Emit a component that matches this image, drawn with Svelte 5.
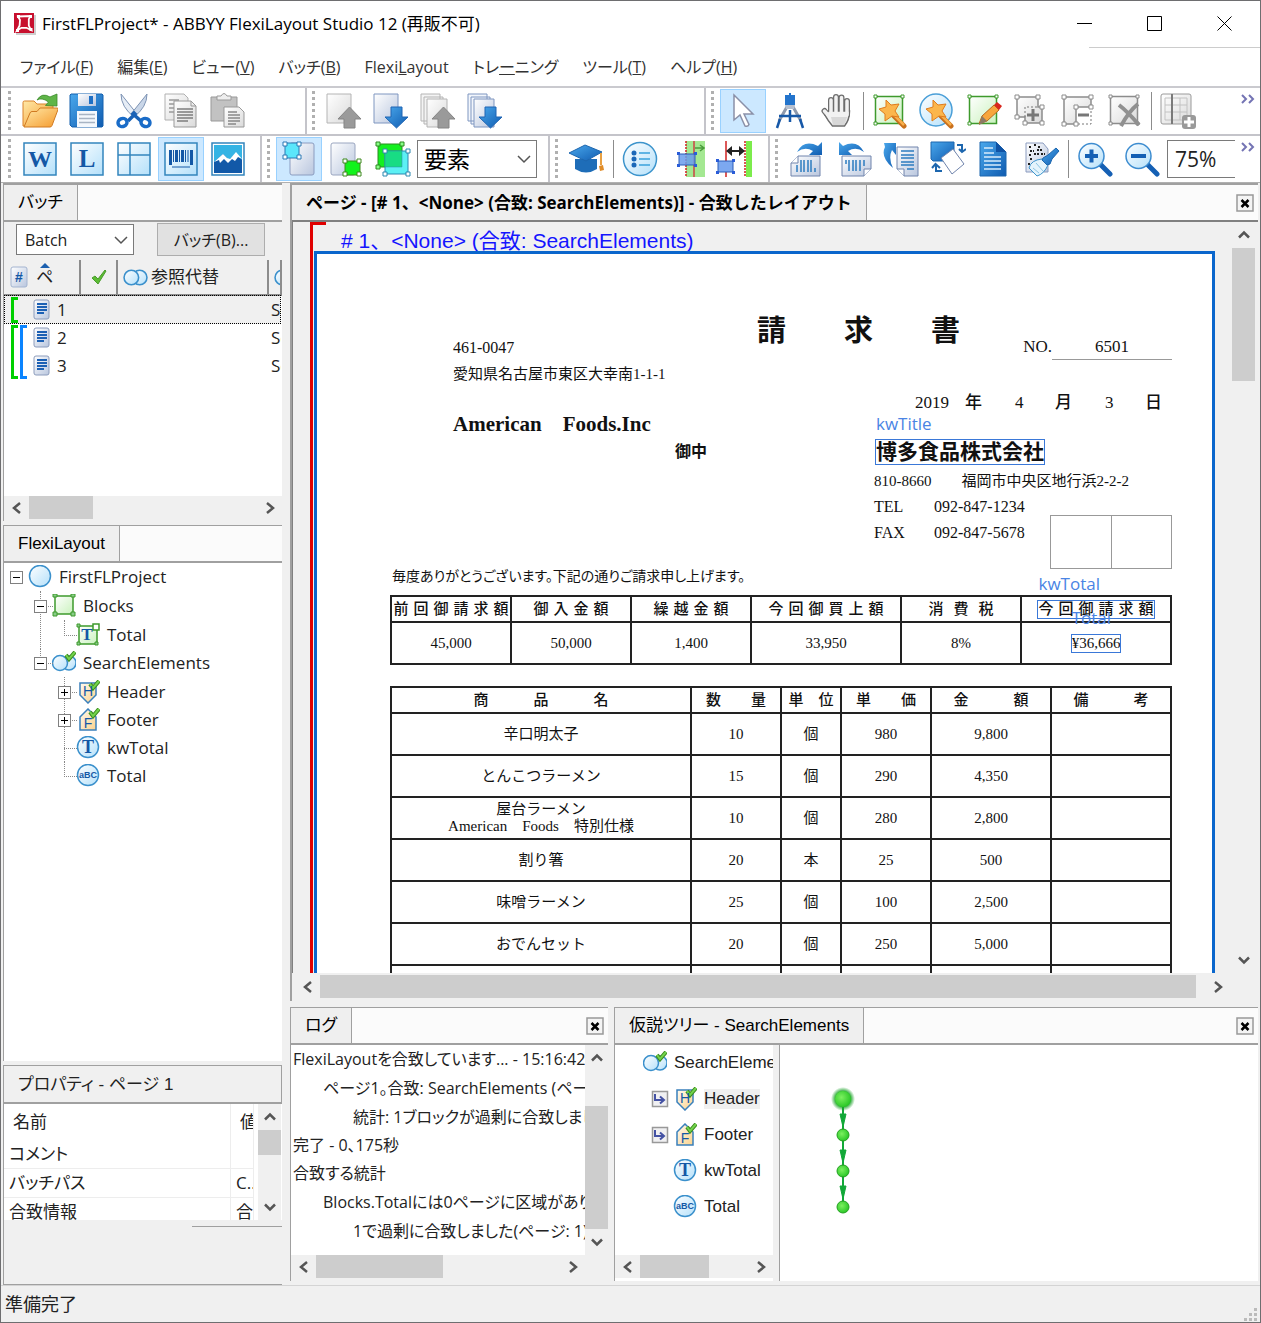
<script lang="ts">
    type Tool = { icon: string; label: string; active?: boolean; disabled?: boolean };

    const menus = [
        { text: 'ファイル', key: 'F' },
        { text: '編集', key: 'E' },
        { text: 'ビュー', key: 'V' },
        { text: 'バッチ', key: 'B' },
        { before: 'Flexi', under: 'L', after: 'ayout' },
        { before: 'トレ', under: 'ー', after: 'ニング' },
        { text: 'ツール', key: 'T' },
        { text: 'ヘルプ', key: 'H' }
    ];

    const fileTools: Tool[] = [
        { icon: 'open', label: '開く' },
        { icon: 'save', label: '保存' },
        { icon: 'cut', label: '切り取り' },
        { icon: 'copy', label: 'コピー', disabled: true },
        { icon: 'paste', label: '貼り付け', disabled: true }
    ];
    const pageTools: Tool[] = [
        { icon: 'page-up', label: '前のページ', disabled: true },
        { icon: 'page-down', label: '次のページ' },
        { icon: 'pages-up', label: '前のバッチ', disabled: true },
        { icon: 'pages-down', label: '次のバッチ' }
    ];
    const pointerTools: Tool[] = [
        { icon: 'arrow', label: '選択', active: true },
        { icon: 'compass', label: '測定' },
        { icon: 'hand', label: 'スクロール' }
    ];
    const blockTools: Tool[] = [
        { icon: 'wand-block', label: 'ブロックの作成' },
        { icon: 'wand-element', label: '要素の作成' },
        { icon: 'draw-block', label: 'ブロックの描画' },
        { icon: 'area-add', label: '領域の追加', disabled: true },
        { icon: 'area-cut', label: '領域の削減', disabled: true },
        { icon: 'area-delete', label: '領域の削除', disabled: true }
    ];
    const objectTools: Tool[] = [
        { icon: 'word', label: '単語' },
        { icon: 'line', label: '行' },
        { icon: 'table', label: '表' },
        { icon: 'barcode', label: 'バーコード', active: true },
        { icon: 'picture', label: '画像' }
    ];
    const showTools: Tool[] = [
        { icon: 'show-element', label: '要素の表示', active: true },
        { icon: 'show-block', label: 'ブロックの表示' },
        { icon: 'show-both', label: 'すべて表示' }
    ];
    const matchTools: Tool[] = [
        { icon: 'list', label: 'リスト' },
        { icon: 'relation', label: '関係' },
        { icon: 'distance', label: '距離' }
    ];
    const imageTools: Tool[] = [
        { icon: 'rotate-right', label: '右に回転' },
        { icon: 'rotate-left', label: '左に回転' },
        { icon: 'rotate-page', label: 'ページの回転' },
        { icon: 'flip', label: '反転' },
        { icon: 'document', label: '文書' },
        { icon: 'clean', label: 'ノイズ除去' }
    ];
    const zoomTools: Tool[] = [
        { icon: 'zoom-in', label: '拡大' },
        { icon: 'zoom-out', label: '縮小' }
    ];

    // letters drawn over the icon shapes
    const letters: Record<string, { text: string; x: number; y: number; size: number; kind: string }> = {
        word: { text: 'W', x: 18, y: 26, size: 24, kind: 'serif' },
        line: { text: 'L', x: 18, y: 26, size: 25, kind: 'serif' },
        'text-block': { text: 'T', x: 11, y: 17, size: 17, kind: 'serif' },
        'static-text': { text: 'T', x: 12, y: 17, size: 18, kind: 'serif' },
        header: { text: 'H', x: 12, y: 16, size: 14, kind: 'sans' },
        footer: { text: 'F', x: 12, y: 20, size: 14, kind: 'sans' },
        string: { text: 'aBC', x: 12, y: 14, size: 9, kind: 'bold' },
        number: { text: '#', x: 10, y: 17, size: 14, kind: 'bold' }
    };

    const properties = [
        { name: 'コメント', value: '' },
        { name: 'バッチパス', value: 'C...' },
        { name: '合致情報', value: '合致' }
    ];

    const log = [
        {
            text: 'FlexiLayoutを合致しています... - 15:16:42',
            children: [
                {
                    text: 'ページ1。合致: SearchElements (ページ',
                    children: [{ text: '統計: 1ブロックが過剰に合致しました', children: [] }]
                }
            ]
        },
        { text: '完了 - 0、175秒', children: [] },
        {
            text: '合致する統計',
            children: [
                {
                    text: 'Blocks.Totalには0ページに区域があります',
                    children: [{ text: '1で過剰に合致しました(ページ: 1)', children: [] }]
                }
            ]
        }
    ];

    const tree = {
        name: 'FirstFLProject',
        icon: 'circle',
        open: true,
        children: [
            {
                name: 'Blocks',
                icon: 'blocks',
                open: true,
                children: [{ name: 'Total', icon: 'text-block' }]
            },
            {
                name: 'SearchElements',
                icon: 'elements',
                open: true,
                children: [
                    { name: 'Header', icon: 'header', open: false },
                    { name: 'Footer', icon: 'footer', open: false },
                    { name: 'kwTotal', icon: 'static-text' },
                    { name: 'Total', icon: 'string' }
                ]
            }
        ]
    };

    const hypotheses = [
        { name: 'Header', icon: 'header', jump: true, selected: true },
        { name: 'Footer', icon: 'footer', jump: true },
        { name: 'kwTotal', icon: 'static-text' },
        { name: 'Total', icon: 'string' }
    ];

    const items = [
        ['辛口明太子', '10', '個', '980', '9,800'],
        ['とんこつラーメン', '15', '個', '290', '4,350'],
        ['屋台ラーメン\nAmerican　Foods　特別仕様', '10', '個', '280', '2,800'],
        ['割り箸', '20', '本', '25', '500'],
        ['味噌ラーメン', '25', '個', '100', '2,500'],
        ['おでんセット', '20', '個', '250', '5,000'],
        ['', '', '', '', '']
    ];

    let batch = $state('Batch');
    let objectType = $state('要素');
    let zoom = $state('75%');
    let selectedPage = $state(1);
</script>

{#snippet icon(name: string, size = 36)}
    <svg width={size} height={size} aria-hidden="true">
        <use href="#i-{name}" />
        {#if letters[name]}
            <text class="letter {letters[name].kind}" x={letters[name].x} y={letters[name].y} font-size={letters[name].size}>{letters[name].text}</text>
        {/if}
    </svg>
{/snippet}

{#snippet toolButtons(tools: Tool[])}
    {#each tools as tool}
        <button class="tool" class:active={tool.active} aria-label={tool.label} disabled={tool.disabled}>
            {@render icon(tool.icon)}
        </button>
    {/each}
{/snippet}

{#snippet scrollbar(dir: string, start: number, size: number)}
    <div class="scrollbar {dir}">
        <button aria-label={dir === 'h' ? '左' : '上'}>
            {@render icon(dir === 'h' ? 'left' : 'up', 16)}
        </button>
        <div class="track">
            <div class="thumb" style={dir === 'h' ? `margin-left:${start}%;width:${size}%` : `top:${start}%;height:${size}%`}></div>
        </div>
        <button aria-label={dir === 'h' ? '右' : '下'}>
            {@render icon(dir === 'h' ? 'right' : 'down', 16)}
        </button>
    </div>
{/snippet}

{#snippet treeNode(node)}
    <li>
        <div class="node">
            <span class="toggle-slot">
                {#if node.open !== undefined}
                    <button class="toggle" class:plus={!node.open} aria-label={node.open ? '折りたたむ' : '展開'}></button>
                {/if}
            </span>
            {@render icon(node.icon, 24)}
            <span>{node.name}</span>
        </div>
        {#if node.children}
            <ul>
                {#each node.children as child}
                    {@render treeNode(child)}
                {/each}
            </ul>
        {/if}
    </li>
{/snippet}

{#snippet logNode(entry)}
    <li>
        <div class="log-line">{entry.text}</div>
        {#if entry.children.length}
            <ul>
                {#each entry.children as child}
                    {@render logNode(child)}
                {/each}
            </ul>
        {/if}
    </li>
{/snippet}

<svg class="sprite" aria-hidden="true">
    <defs>
        <linearGradient id="g-blue" x1="0" y1="0" x2="1" y2="1"><stop offset="0" stop-color="#4aa8ec" /><stop offset="1" stop-color="#0f5bb0" /></linearGradient>
        <linearGradient id="g-sky" x1="0" y1="0" x2="1" y2="1"><stop offset="0" stop-color="#fff" /><stop offset="1" stop-color="#b4e0fa" /></linearGradient>
        <linearGradient id="g-page" x1="0" y1="0" x2="1" y2="1"><stop offset="0" stop-color="#fff" /><stop offset="1" stop-color="#b9c6de" /></linearGradient>
        <linearGradient id="g-gray" x1="0" y1="0" x2="1" y2="1"><stop offset="0" stop-color="#fff" /><stop offset="1" stop-color="#dadada" /></linearGradient>
        <linearGradient id="g-orange" x1="0" y1="0" x2="1" y2="1"><stop offset="0" stop-color="#ffe9a8" /><stop offset="1" stop-color="#f59a2c" /></linearGradient>
        <linearGradient id="g-green" x1="0" y1="0" x2="1" y2="1"><stop offset="0" stop-color="#fff" /><stop offset="1" stop-color="#c9f2bd" /></linearGradient>
        <linearGradient id="g-tan" x1="0" y1="0" x2="1" y2="1"><stop offset="0" stop-color="#fffaf0" /><stop offset="1" stop-color="#fbd28c" /></linearGradient>
        <radialGradient id="g-node" cx="0.4" cy="0.4" r="0.6"><stop offset="0" stop-color="#7cf060" /><stop offset="1" stop-color="#2cc828" /></radialGradient>
        <radialGradient id="g-halo"><stop offset="0.6" stop-color="#1da32a" /><stop offset="1" stop-color="#1da32a" stop-opacity="0" /></radialGradient>
    </defs>

    <symbol id="i-app" viewBox="0 0 22 22">
        <path d="M2 2h20v20H2z" fill="#9d9d9d" opacity=".5" />
        <path d="M0 0h20v20H0z" fill="#c8102e" />
        <path d="M4 3.5 16.5 3 14.8 6.2 14.8 12.6 17 17 12.4 14.8 7.4 14.8 3 17.5 5.6 12.4 6 7Z" fill="none" stroke="#fff" stroke-width="1.8" />
        <path d="M3 2h3v3H3zM15 2h3v3h-3zM15.500 15h3v3h-3zM2 16h3v3H2z" fill="#fff" />
    </symbol>

    <symbol id="i-open" viewBox="0 0 36 36">
        <path d="M1 33V9.500Q1 8 2.500 8H12l3 3h15q1 0 1 1v7L27 33Z" fill="url(#g-orange)" stroke="#d9822b" />
        <path d="M2 34 8 20q.6-1.500 2-1.500h5l3-3.500h17q1.500 0 1 1.500l-6 16q-.6 1.500-2 1.500Z" fill="url(#g-orange)" stroke="#d07a22" />
        <path d="M15 7Q20-1 28 4l1-.5L35 1v12l-11.500-.5 3-3.500Q20 4 15 7Z" fill="#5fb548" stroke="#3c8c2c" stroke-width=".8" />
    </symbol>
    <symbol id="i-save" viewBox="0 0 36 36">
        <path d="M2 1h31l1 1v31l-1 1H3l-2-2V2Z" fill="url(#g-blue)" stroke="#1560ae" />
        <path d="M9 1h18v12H9Z" fill="url(#g-page)" /><path d="M20 3h4v8h-4Z" fill="#1f6fc4" />
        <path d="M8 18h20v16H8Z" fill="#f4f8fd" /><path d="M10 21.500h16M10 25.500h16M10 29.500h16" stroke="#a8b4c4" stroke-width="1.500" />
    </symbol>
    <symbol id="i-cut" viewBox="0 0 36 36">
        <path d="M5 1 21 21l-3 3Q5 14 5 1Z" fill="#e6edf6" stroke="#7d93b4" />
        <path d="M31 1 15 21l3 3Q31 14 31 1Z" fill="#c9d6e8" stroke="#7d93b4" />
        <path d="m17 19 2 2-7 7M19 19l-2 2 8 7" fill="none" stroke="#1a62b6" stroke-width="3.500" />
        <ellipse cx="6.500" cy="29.500" rx="4.500" ry="4" transform="rotate(-25 6.500 29.500)" fill="none" stroke="#1a6cc8" stroke-width="3.500" />
        <ellipse cx="29.500" cy="29.500" rx="4.500" ry="4" transform="rotate(25 29.500 29.500)" fill="none" stroke="#1a6cc8" stroke-width="3.500" />
    </symbol>
    <symbol id="i-copy" viewBox="0 0 36 36">
        <path d="M2 1h19l4 4v22H2Z" fill="url(#g-gray)" stroke="#b0b0b0" /><path d="M6 7h10M6 11h8M6 15h8M6 19h8" stroke="#999" stroke-width="1.500" />
        <path d="M11 8h17l5 5v21H11Z" fill="url(#g-gray)" stroke="#999" /><path d="M28 8v5h5" fill="none" stroke="#999" />
        <path d="M14 16h16M14 19h16M14 22h16M14 25h16M14 28h11" stroke="#7d7d7d" stroke-width="1.500" />
    </symbol>
    <symbol id="i-paste" viewBox="0 0 36 36">
        <path d="M1 4h26v24H1Z" fill="#c2c2c2" stroke="#999" /><path d="M7 7V3h4q3-5 6 0h4v4Z" fill="#eee" stroke="#999" />
        <path d="M14 14h15l5 5v15H14Z" fill="url(#g-gray)" stroke="#999" />
        <path d="M18 19h9M18 22h12M18 25h12M18 28h12M18 31h8" stroke="#888" stroke-width="1.500" />
    </symbol>
    <symbol id="i-page-up" viewBox="0 0 36 36">
        <path d="M1 1h24v29H1Z" fill="url(#g-gray)" stroke="#b4b4b4" />
        <path d="M23.500 14 35 26h-6v9H18v-9h-6Z" fill="#9a9a9a" stroke="#858585" />
    </symbol>
    <symbol id="i-page-down" viewBox="0 0 36 36">
        <path d="M1 1h24v29H1Z" fill="url(#g-page)" stroke="#7f96c0" />
        <path d="M18 14h11v10h6L23.500 35 12 24h6Z" fill="url(#g-blue)" stroke="#1f65b4" />
    </symbol>
    <symbol id="i-pages-up" viewBox="0 0 36 36">
        <path d="M1 1h19v27H1ZM4 4h19v27H4Z" fill="#f4f4f4" stroke="#b4b4b4" /><path d="M7 6h20v28H7Z" fill="url(#g-gray)" stroke="#b4b4b4" />
        <path d="M23.500 14 35 26h-6v9H18v-9h-6Z" fill="#9a9a9a" stroke="#858585" />
    </symbol>
    <symbol id="i-pages-down" viewBox="0 0 36 36">
        <path d="M1 1h19v27H1ZM4 4h19v27H4Z" fill="#f2f6fc" stroke="#7f96c0" /><path d="M7 6h20v28H7Z" fill="url(#g-page)" stroke="#7f96c0" />
        <path d="M18 14h11v10h6L23.500 35 12 24h6Z" fill="url(#g-blue)" stroke="#1f65b4" />
    </symbol>
    <symbol id="i-arrow" viewBox="0 0 36 36">
        <path d="M9 2v25l6-5 5 11q3 1 4-1.500L19 21h9Z" fill="#fff" stroke="#8a90a8" stroke-width="1.500" />
    </symbol>
    <symbol id="i-compass" viewBox="0 0 36 36">
        <path d="M16 12 7 28M20 12l9 16" stroke="#8e99ac" stroke-width="3" /><path d="M8 26 5 35M28 26l3 9" stroke="#1658a8" stroke-width="2.500" />
        <path d="M7 23h22M18 17v12" stroke="#1658a8" stroke-width="2.500" />
        <path d="M17 0h2v2h4v10H13V2h4Z" fill="#2374cc" /><path d="M13 12h10l-1 4h-8Z" fill="#b6c0d0" />
    </symbol>
    <symbol id="i-hand" viewBox="0 0 36 36">
        <path d="M12 7v12M17 4v14M22.500 4.500v14M28 8v14M5.500 18l7 9" fill="none" stroke="#6d6d6d" stroke-width="6" stroke-linecap="round" />
        <path d="M9.500 18h21q0 9-5 15h-12Q9 28 6 22Z" fill="#f2f2f2" stroke="#6d6d6d" stroke-width="1.500" />
        <path d="M12 7v13M17 4v16M22.500 4.500v16M28 8v14M5.500 18l8 9" fill="none" stroke="#f2f2f2" stroke-width="3.500" stroke-linecap="round" />
        <path d="M12 24h16q-1 5-3 8H14Z" fill="#d8d8d8" />
    </symbol>
    <symbol id="i-wand-block" viewBox="0 0 36 36">
        <path d="M3.500 3.500h27v27h-27Z" fill="url(#g-green)" stroke="#3e9a2c" stroke-width="1.500" />
        <use href="#star" /><path d="M2 2h3v3H2zM29 2h3v3h-3zM2 29h3v3H2z" fill="#fff" stroke="#3e9a2c" />
    </symbol>
    <symbol id="i-wand-element" viewBox="0 0 36 36">
        <circle cx="17" cy="17" r="16" fill="url(#g-sky)" stroke="#4a9fd8" stroke-width="1.500" /><use href="#star" />
    </symbol>
    <g id="star">
        <path d="m20 21 12 12" stroke="#c9701c" stroke-width="5" stroke-linecap="round" /><path d="m20 20 12 12" stroke="#f8b04c" stroke-width="2.500" />
        <path d="m14 7 5 5 8-1-4 7 4 6-7-1-7 5v-7l-6-5 7-2Z" fill="#fbb64c" stroke="#e07c1c" />
    </g>
    <symbol id="i-draw-block" viewBox="0 0 36 36">
        <path d="M3.500 3.500h27v27h-27Z" fill="url(#g-green)" stroke="#3e9a2c" stroke-width="1.500" />
        <path d="M2 2h3v3H2zM29 2h3v3h-3zM2 29h3v3H2z" fill="#fff" stroke="#3e9a2c" />
        <path d="m13 31 3-8L28 12l5 5-12 11Z" fill="#f7a63c" stroke="#b96a1c" /><path d="m28 12 3-3 5 4-3 4Z" fill="#d9261c" /><path d="m13 32 3-9 5 5Z" fill="#8b7a66" />
    </symbol>
    <symbol id="i-area-add" viewBox="0 0 36 36">
        <path d="M4 4h21v10h4v16H12v-6H4Z" fill="url(#g-gray)" stroke="#8c8c8c" stroke-width="1.500" /><path d="M12 24V14h13" fill="none" stroke="#777" stroke-dasharray="2 2" />
        <path d="M14 22h12M20 16v12" stroke="#777" stroke-width="3" />
        <path d="M2 2h4v4H2zM23 2h4v4h-4zM2 22h4v4H2zM10 28h4v4h-4zM27 28h4v4h-4zM27 12h4v4h-4z" fill="#fff" stroke="#8c8c8c" />
    </symbol>
    <symbol id="i-area-cut" viewBox="0 0 36 36">
        <path d="M4 4h27v10H16v17H4Z" fill="url(#g-gray)" stroke="#8c8c8c" stroke-width="1.500" /><path d="M18 31h13V16" fill="none" stroke="#777" stroke-dasharray="2 2" />
        <path d="M18 22h11" stroke="#777" stroke-width="3" />
        <path d="M2 2h4v4H2zM29 2h4v4h-4zM2 29h4v4H2zM14 29h4v4h-4zM14 12h4v4h-4zM29 12h4v4h-4z" fill="#fff" stroke="#8c8c8c" />
    </symbol>
    <symbol id="i-area-delete" viewBox="0 0 36 36">
        <path d="M3.500 3.500h27v27h-27Z" fill="url(#g-gray)" stroke="#8c8c8c" stroke-width="1.500" />
        <path d="M2 2h3v3H2zM29 2h3v3h-3zM2 29h3v3H2zM29 29h3v3h-3z" fill="#fff" stroke="#8c8c8c" />
        <path d="M12 12q8 6 20 20M31 11Q22 18 14 33" fill="none" stroke="#909090" stroke-width="4" />
    </symbol>
    <symbol id="i-grid-add" viewBox="0 0 36 36">
        <rect x="1" y="1" width="30" height="30" rx="2" fill="url(#g-gray)" stroke="#9a9a9a" />
        <path d="M5 5h22v22H5ZM5 12h22M5 19h22M20 5v22" fill="none" stroke="#c2c2c2" /><path d="M12 1v30" stroke="#7a7a7a" stroke-width="2" />
        <rect x="22" y="22" width="14" height="14" rx="3" fill="#9a9a9a" /><path d="M24 29h10M29 24v10" stroke="#fff" stroke-width="3" />
    </symbol>
    <symbol id="i-word" viewBox="0 0 36 36">
        <path d="M2 2h32v32H2Z" fill="url(#g-sky)" stroke="#3385bd" stroke-width="1.500" />
    </symbol>
    <symbol id="i-line" viewBox="0 0 36 36">
        <path d="M2 2h32v32H2Z" fill="url(#g-sky)" stroke="#3385bd" stroke-width="1.500" />
    </symbol>
    <symbol id="i-table" viewBox="0 0 36 36">
        <path d="M2 2h32v32H2ZM2 14h32M14 2v32" fill="url(#g-sky)" stroke="#3385bd" stroke-width="1.500" />
    </symbol>
    <symbol id="i-barcode" viewBox="0 0 36 36">
        <path d="M2 2h32v32H2Z" fill="url(#g-sky)" stroke="#3385bd" stroke-width="1.500" />
        <path d="M7.500 9v15M13.500 9v12M19.500 9v12M28.500 9v15" stroke="#1458a6" stroke-width="3" /><path d="M10.500 9v12M16.500 9v12M22.500 9v12M25 9v12M9 26h18" stroke="#1458a6" />
    </symbol>
    <symbol id="i-picture" viewBox="0 0 36 36">
        <path d="M2 2h32v32H2Z" fill="#fff" stroke="#3385bd" stroke-width="1.500" /><path d="M4 4h28v28H4Z" fill="#35b4e4" />
        <path d="m4 21 9-8 6 6 7-7 6 7v13H4Z" fill="#1259a8" /><path d="m4 21 9-8 4 4 3 1 6-7 6 7-4-2-3 4-3-2-4 4-4-4-4 4-1-3Z" fill="#fff" />
    </symbol>
    <symbol id="i-show-element" viewBox="0 0 36 36">
        <rect x="9" y="2" width="24" height="32" rx="2" fill="url(#g-page)" stroke="#8b9cc0" />
        <path d="M4 2h14v15H4Z" fill="#5be6fb" stroke="#2a78b4" /><path d="M2 1h4v4H2zM16 1h4v4h-4zM2 14h4v4H2zM16 14h4v4h-4z" fill="#fff" stroke="#2a78b4" />
    </symbol>
    <symbol id="i-show-block" viewBox="0 0 36 36">
        <rect x="3" y="2" width="24" height="32" rx="2" fill="url(#g-page)" stroke="#9aa6c0" />
        <path d="M17 20h15v14H17Z" fill="#12f31c" stroke="#3c8a1c" /><path d="M15 18h4v4h-4zM29 18h4v4h-4zM15 31h4v4h-4zM29 31h4v4h-4z" fill="#fff" stroke="#3c8a1c" />
    </symbol>
    <symbol id="i-show-both" viewBox="0 0 36 36">
        <path d="M3 3h24v23H3Z" fill="#14f020" stroke="#2c8a20" /><path d="M10 10h23v23H10Z" fill="#5cf0f4" stroke="#2a88b0" />
        <path d="M10 10h17v16H10Z" fill="#18dc84" stroke="#2a88b0" stroke-width=".5" />
        <path d="M1 1h4v4H1zM25 1h4v4h-4zM1 24h4v4H1z" fill="#8f8" stroke="#2c8a20" /><path d="M8 8h4v4H8zM31 8h4v4h-4zM8 31h4v4H8zM31 31h4v4h-4z" fill="#fff" stroke="#2a88b0" />
    </symbol>
    <symbol id="i-train" viewBox="0 0 36 36">
        <path d="M6 18v10q11 7 22 0V18Z" fill="#1e6db8" /><path d="M0 12 16 4l17 7-16 9Z" fill="url(#g-blue)" stroke="#1d66ae" />
        <path d="M32 12v12" stroke="#e8a042" stroke-width="2" /><path d="m30 25 4-1 1 5-4 1Z" fill="#e08c28" />
    </symbol>
    <symbol id="i-list" viewBox="0 0 36 36">
        <circle cx="18" cy="18" r="16.500" fill="url(#g-sky)" stroke="#3c94cc" stroke-width="1.500" />
        <path d="M17 12h11M17 18h11M17 24h11" stroke="#5fb4e4" stroke-width="2" /><circle cx="12" cy="12" r="2.500" fill="#1c68b8" /><circle cx="12" cy="18" r="2.500" fill="#1c68b8" /><circle cx="12" cy="24" r="2.500" fill="#1c68b8" />
    </symbol>
    <symbol id="i-relation" viewBox="0 0 36 36">
        <path d="M17 0h19v36H17Z" fill="#a4e892" /><path d="M17 0v36" stroke="#d02020" stroke-width="1.500" stroke-dasharray="2 1" /><path d="M25 0v36" stroke="#c44" stroke-width="1.500" />
        <path d="M10 13h16v11H10Z" fill="#6a9cec" fill-opacity=".85" stroke="#2a5cb8" /><path d="M8 11h3v3H8zM25 11h3v3h-3zM8 23h3v3H8zM25 23h3v3h-3z" fill="#2a5cd8" />
        <path d="M26 7h8M31 4l4 3-4 3" fill="none" stroke="#4a9c3c" stroke-width="1.500" />
    </symbol>
    <symbol id="i-distance" viewBox="0 0 36 36">
        <path d="M30 0h6v36h-6Z" fill="#7cec4c" /><path d="M29 0v36" stroke="#d02020" stroke-width="1.500" stroke-dasharray="2 1" /><path d="M10 0v36" stroke="#d02020" stroke-width="1.500" />
        <path d="M12 10h16" stroke="#222" stroke-width="2" /><path d="m10 10 6-5v10ZM29 10l-6-5v10Z" fill="#222" />
        <path d="M2 20h15v11H2Z" fill="#7ca8f0" stroke="#2a5cb8" /><path d="M0 18h3v3H0zM16 18h3v3h-3zM0 30h3v3H0zM16 30h3v3h-3z" fill="#2a5cd8" />
    </symbol>
    <symbol id="i-rotate-right" viewBox="0 0 36 36">
        <path d="M8 11Q15-2 29 5l4-4v13H20l4-4q-8-5-16 1Z" fill="url(#g-blue)" />
        <path d="M9 15h22v20H2V22Z" fill="url(#g-page)" stroke="#7084ac" /><path d="M9 15v7H2" fill="#fff" stroke="#7084ac" />
        <path d="M8 24v7M12 19v12M15 19v12M19 19v12M22 19v12M26 27v4" stroke="#2c7cc0" stroke-width="1.500" />
    </symbol>
    <symbol id="i-rotate-left" viewBox="0 0 36 36">
        <path d="M28 11Q21-2 7 5L3 1v13h13l-4-4q8-5 16 1Z" fill="url(#g-blue)" />
        <path d="M6 15h29v13l-7 7H6Z" fill="url(#g-page)" stroke="#7084ac" /><path d="M28 35v-7h7" fill="#fff" stroke="#7084ac" />
        <path d="M10 19v4M13 19v11M17 19v11M20 19v11M24 19v11M28 19v6" stroke="#2c7cc0" stroke-width="1.500" />
    </symbol>
    <symbol id="i-rotate-page" viewBox="0 0 36 36">
        <path d="M10 27Q-3 16 2 6L1 2h12v12L9 9q-4 8 1 18Z" fill="url(#g-blue)" />
        <path d="M14 6h21v29H21l-7-7Z" fill="url(#g-page)" stroke="#7084ac" /><path d="M14 28h7v7" fill="#fff" stroke="#7084ac" />
        <path d="M18 10h13M18 14h13M18 17h13M18 21h13M18 24h13M24 28h7" stroke="#2c7cc0" stroke-width="1.500" />
    </symbol>
    <symbol id="i-flip" viewBox="0 0 36 36">
        <path d="M1 1h23v19H3l-2-2Z" fill="url(#g-blue)" stroke="#1d66ae" /><path d="m23 8 11 15-12 10-11-16Z" fill="#fff" stroke="#7084ac" />
        <path d="M27 4h5v7M29 8l3 3 4-3M12 30H6v-6M2 27l3.500-4L10 27" fill="none" stroke="#1d66ae" stroke-width="2" />
    </symbol>
    <symbol id="i-document" viewBox="0 0 36 36">
        <path d="M3 1h16l10 10v24H3Z" fill="url(#g-blue)" stroke="#1d66ae" /><path d="M19 1v10h10Z" fill="#1052a4" />
        <path d="M7 7h9M7 12h10M7 16h17M7 20h17M7 24h17M7 28h17" stroke="#d8ecfc" stroke-width="1.500" />
    </symbol>
    <symbol id="i-clean" viewBox="0 0 36 36">
        <path d="M2 2h17l5 6v23H2Z" fill="url(#g-page)" stroke="#8b9cc0" /><path d="M5 6h3M10 4h3M14 6h3M6 10h4M13 9h5M5 14h3M10 13h5M17 13h4M6 18h2M4 23h2" stroke="#222" stroke-width="2" stroke-dasharray="2 1" />
        <path d="m18 18 6 6q-4 9-11 11L5 27q2-8 13-9Z" fill="#e4f4fc" stroke="#3c94cc" /><path d="m9 27 6 5M12 22l7 8" stroke="#8cc4e4" />
        <path d="m19 17 5-3 8-7 3 3-7 8-2 5-3 1-5-5Z" fill="url(#g-blue)" stroke="#1d66ae" />
    </symbol>
    <symbol id="i-zoom-in" viewBox="0 0 36 36">
        <path d="m23 23 10 10" stroke="#1560b4" stroke-width="5" stroke-linecap="round" /><circle cx="14.500" cy="15" r="12.500" fill="url(#g-sky)" stroke="#3c8cd0" stroke-width="1.500" />
        <path d="M8 15h13M14.500 8.500v13" stroke="#1560b4" stroke-width="4" />
    </symbol>
    <symbol id="i-zoom-out" viewBox="0 0 36 36">
        <path d="m23 23 10 10" stroke="#1560b4" stroke-width="5" stroke-linecap="round" /><circle cx="14.500" cy="15" r="12.500" fill="url(#g-sky)" stroke="#3c8cd0" stroke-width="1.500" />
        <path d="M7 15h15" stroke="#1560b4" stroke-width="4" />
    </symbol>

    <symbol id="i-up" viewBox="0 0 16 16"><path d="m3 10.500 5-5 5 5" fill="none" stroke="#555" stroke-width="2.500" /></symbol>
    <symbol id="i-down" viewBox="0 0 16 16"><path d="m3 5.500 5 5 5-5" fill="none" stroke="#555" stroke-width="2.500" /></symbol>
    <symbol id="i-left" viewBox="0 0 16 16"><path d="m11 3-6 5 6 5" fill="none" stroke="#555" stroke-width="2.500" /></symbol>
    <symbol id="i-right" viewBox="0 0 16 16"><path d="m5 3 6 5-6 5" fill="none" stroke="#555" stroke-width="2.500" /></symbol>
    <symbol id="i-chevron" viewBox="0 0 16 16"><path d="m2 5 6 6 6-6" fill="none" stroke="#555" stroke-width="1.500" /></symbol>
    <symbol id="i-close" viewBox="0 0 18 18"><path d="M1 1h16v16H1Z" fill="#f4f4f4" stroke="#999" stroke-width="1.500" /><path d="m5.500 6 7 7M12.500 6l-7 7" stroke="#000" stroke-width="2.500" /></symbol>
    <symbol id="i-more" viewBox="0 0 14 14"><path d="m1 3 4 4-4 4M8 3l4 4-4 4" fill="none" stroke="#7474b4" stroke-width="2" /></symbol>

    <symbol id="i-circle" viewBox="0 0 24 24"><circle cx="12" cy="11" r="10.500" fill="url(#g-sky)" stroke="#3a90cc" stroke-width="1.500" /></symbol>
    <symbol id="i-blocks" viewBox="0 0 24 24">
        <path d="M3 2h18v18H3Z" fill="url(#g-green)" stroke="#3e9a2c" stroke-width="1.500" /><path d="M1 0h4v3H1zM19 0h4v3h-4zM1 18h4v4H1zM19 18h4v4h-4z" fill="#8c8" stroke="#3e9a2c" />
    </symbol>
    <symbol id="i-text-block" viewBox="0 0 24 24">
        <path d="M3 3h18v18H3Z" fill="url(#g-green)" stroke="#3e9a2c" stroke-width="1.500" /><path d="M1 1h3v3H1zM1 19h3v3H1zM19 19h3v3h-3z" fill="#8c8" stroke="#3e9a2c" />
        <path d="M17 1h6v6h-6Z" fill="#fff" stroke="#3e9a2c" stroke-width="1.500" />
    </symbol>
    <symbol id="i-elements" viewBox="0 0 24 24">
        <circle cx="17" cy="12" r="7" fill="url(#g-sky)" stroke="#3a90cc" stroke-width="1.500" /><circle cx="8" cy="12" r="7.500" fill="url(#g-sky)" stroke="#3a90cc" stroke-width="1.500" /><use href="#tick" />
    </symbol>
    <g id="tick"><path d="m14 4 3 4 6-7" fill="none" stroke="#3c8a20" stroke-width="4" /><path d="m14 4 3 4 6-7" fill="none" stroke="#72d44c" stroke-width="2" /></g>
    <symbol id="i-header" viewBox="0 0 24 24">
        <path d="M4 3h16v12l-8 8-8-8Z" fill="url(#g-tan)" stroke="#3a80bc" stroke-width="1.500" /><use href="#tick" />
    </symbol>
    <symbol id="i-footer" viewBox="0 0 24 24">
        <path d="M4 9 12 1l8 8v13H4Z" fill="url(#g-tan)" stroke="#3a80bc" stroke-width="1.500" /><use href="#tick" />
    </symbol>
    <symbol id="i-static-text" viewBox="0 0 24 24"><circle cx="12" cy="11" r="10.500" fill="url(#g-sky)" stroke="#3a90cc" stroke-width="1.500" /></symbol>
    <symbol id="i-string" viewBox="0 0 24 24"><circle cx="12" cy="11" r="10.500" fill="url(#g-sky)" stroke="#3a90cc" stroke-width="1.500" /></symbol>
    <symbol id="i-number" viewBox="0 0 24 24"><rect x="2" y="2" width="16" height="20" rx="2" fill="url(#g-page)" stroke="#a4b4d0" /></symbol>
    <symbol id="i-check" viewBox="0 0 16 16"><path d="m1 9 3-2 3 3 7-9 1 1-8 13Z" fill="#5cbc34" stroke="#4a9c2c" /></symbol>
    <symbol id="i-pair" viewBox="0 0 24 16">
        <circle cx="16" cy="8" r="7" fill="url(#g-sky)" stroke="#3a90cc" stroke-width="1.500" /><circle cx="8" cy="8" r="7" fill="url(#g-sky)" stroke="#3a90cc" stroke-width="1.500" />
    </symbol>
    <symbol id="i-row-page" viewBox="0 0 18 22">
        <rect x="1" y="1" width="15" height="19" rx="2" fill="url(#g-page)" stroke="#8c9cbc" /><path d="M4 5h10M4 8h10M4 11h10M4 14h7" stroke="#1c60b4" stroke-width="2" />
    </symbol>
    <symbol id="i-jump" viewBox="0 0 18 18">
        <path d="M1.500 1.500h15v15h-15Z" fill="#f0f0f2" stroke="#999" stroke-width="1.500" /><path d="M4 4v6h8M9 6.500l4 3.500-4 3.500" fill="none" stroke="#4452a4" stroke-width="2" />
    </symbol>
</svg>

<div class="window">
    <header class="titlebar">
        {@render icon('app', 22)}
        <h1>FirstFLProject* - ABBYY FlexiLayout Studio 12 (再販不可)</h1>
        <div class="controls">
            <button aria-label="最小化"><svg width="16" height="16"><path d="M0 7.500h15" stroke="#000" /></svg></button>
            <button aria-label="最大化"><svg width="16" height="16"><path d="M.5.5h14v14H.5Z" fill="none" stroke="#000" /></svg></button>
            <button aria-label="閉じる"><svg width="16" height="16"><path d="m.5.5 14 14M14.500.5l-14 14" stroke="#000" /></svg></button>
        </div>
    </header>

    <nav class="menubar">
        {#each menus as menu}
            {#if menu.key}
                <button>{menu.text}(<u>{menu.key}</u>)</button>
            {:else}
                <button>{menu.before}<u>{menu.under}</u>{menu.after}</button>
            {/if}
        {/each}
    </nav>

    <div class="toolbar">
        <div class="group file-group"><i class="grip"></i>{@render toolButtons(fileTools)}</div>
        <div class="group nav-group"><i class="grip"></i>{@render toolButtons(pageTools)}</div>
        <div class="group rest">
            <i class="grip"></i>
            {@render toolButtons(pointerTools)}
            <i class="sep"></i>
            {@render toolButtons(blockTools)}
            <i class="sep"></i>
            {@render toolButtons([{ icon: 'grid-add', label: '表の追加', disabled: true }])}
            <button class="more" aria-label="その他">{@render icon('more', 14)}</button>
        </div>
    </div>
    <div class="toolbar">
        <div class="group object-group"><i class="grip"></i>{@render toolButtons(objectTools)}</div>
        <div class="group show-group">
            <i class="grip"></i>
            {@render toolButtons(showTools)}
            <span class="select type-select">
                <select aria-label="表示対象" bind:value={objectType}><option>要素</option><option>ブロック</option></select>
                {@render icon('chevron', 16)}
            </span>
        </div>
        <div class="group match-group">
            <i class="grip"></i>
            {@render toolButtons([{ icon: 'train', label: 'トレーニング' }])}
            <i class="sep"></i>
            {@render toolButtons(matchTools)}
        </div>
        <div class="group rest">
            <i class="grip"></i>
            {@render toolButtons(imageTools)}
            <i class="sep"></i>
            {@render toolButtons(zoomTools)}
            <input class="zoom" aria-label="ズーム" bind:value={zoom} />
            <button class="more" aria-label="その他">{@render icon('more', 14)}</button>
        </div>
    </div>

    <main class="work">
        <aside class="side">
            <section class="panel batch">
                <div class="tabs"><h2 class="tab">バッチ</h2></div>
                <div class="batch-bar">
                    <span class="select batch-select">
                        <select aria-label="バッチ" bind:value={batch}><option>Batch</option></select>
                        {@render icon('chevron', 16)}
                    </span>
                    <button class="push">バッチ(B)...</button>
                </div>
                <div class="batch-list">
                    <table>
                        <colgroup><col class="c-page" /><col class="c-check" /><col class="c-alt" /><col /></colgroup>
                        <thead>
                            <tr>
                                <th><span class="th">{@render icon('number', 24)}<span class="sorted">ペ</span></span></th>
                                <th><span class="th center">{@render icon('check', 16)}</span></th>
                                <th><span class="th">{@render icon('pair', 25)}参照代替</span></th>
                                <th><span class="th">{@render icon('pair', 25)}</span></th>
                            </tr>
                        </thead>
                        <tbody>
                            {#each [1, 2, 3] as page}
                                <tr class:selected={page === selectedPage} onclick={() => (selectedPage = page)}>
                                    <td>
                                        <span class="page-cell">
                                            <i class="bracket green" class:single={page === 1} class:top={page === 2} class:bottom={page === 3}></i>
                                            <i class="bracket blue" class:top={page === 2} class:bottom={page === 3}></i>
                                            {@render icon('row-page', 22)}{page}
                                        </span>
                                    </td>
                                    <td></td>
                                    <td></td>
                                    <td class="matched">SearchElements</td>
                                </tr>
                            {/each}
                        </tbody>
                    </table>
                </div>
                {@render scrollbar('h', 0, 28)}
            </section>

            <section class="panel layout">
                <div class="tabs"><h2 class="tab">FlexiLayout</h2></div>
                <ul class="tree">{@render treeNode(tree)}</ul>
            </section>

            <section class="panel props">
                <h2 class="props-title">プロパティ - ページ 1</h2>
                <div class="props-body">
                    <table>
                        <colgroup><col /><col class="c-value" /></colgroup>
                        <thead><tr><th>名前</th><th>値</th></tr></thead>
                        <tbody>
                            {#each properties as prop}
                                <tr><td>{prop.name}</td><td>{prop.value}</td></tr>
                            {/each}
                        </tbody>
                    </table>
                    {@render scrollbar('v', 0, 39)}
                </div>
                <div class="props-rest"></div>
            </section>
        </aside>

        <div class="center-area">
            <section class="panel page-panel">
                <div class="tabs">
                    <h2 class="tab strong">ページ - [# 1、&lt;None&gt; (合致: SearchElements)] - 合致したレイアウト</h2>
                    <button class="close" aria-label="閉じる">{@render icon('close', 18)}</button>
                </div>
                <div class="viewer">
                    <div class="canvas">
                        <div class="batch-mark">
                            <div class="page-caption"># 1、&lt;None&gt; (合致: SearchElements)</div>
                            <article class="sheet">
                                <div class="sheet-title">請　　求　　書</div>
                                <div class="sheet-head">
                                    <div class="customer">
                                        <p class="digits">461-0047</p>
                                        <p>愛知県名古屋市東区大幸南1-1-1</p>
                                        <p class="company">American　Foods.Inc</p>
                                        <p class="honor">御中</p>
                                    </div>
                                    <div class="issuer">
                                        <div class="number">NO.<span>6501</span></div>
                                        <div class="date"><span>2019</span><span>年</span><span>4</span><span>月</span><span>3</span><span>日</span></div>
                                        <div class="seller"><span class="mark">博多食品株式会社<b class="tag">kwTitle</b></span></div>
                                        <p>810-8660　　福岡市中央区地行浜2-2-2</p>
                                        <p class="digits"><span>TEL</span>092-847-1234</p>
                                        <p class="digits"><span>FAX</span>092-847-5678</p>
                                        <div class="stamps"><span></span><span></span></div>
                                    </div>
                                </div>
                                <p class="greeting">毎度ありがとうございます。下記の通りご請求申し上げます。</p>
                                <table class="form summary">
                                    <colgroup><col class="w4" /><col class="w4" /><col class="w4" /><col class="w5" /><col class="w4" /><col /></colgroup>
                                    <thead>
                                        <tr>
                                            <th>前&#8196;回&#8196;御&#8196;請&#8196;求&#8196;額</th>
                                            <th>御&#8196;入&#8196;金&#8196;額</th>
                                            <th>繰&#8196;越&#8196;金&#8196;額</th>
                                            <th>今&#8196;回&#8196;御&#8196;買&#8196;上&#8196;額</th>
                                            <th>消&#8196;&#8196;費&#8196;&#8196;税</th>
                                            <th><span class="mark">今&#8196;回&#8196;御&#8196;請&#8196;求&#8196;額<b class="tag">kwTotal</b></span></th>
                                        </tr>
                                    </thead>
                                    <tbody>
                                        <tr>
                                            <td>45,000</td>
                                            <td>50,000</td>
                                            <td>1,400</td>
                                            <td>33,950</td>
                                            <td>8%</td>
                                            <td><span class="mark">¥36,666<b class="tag">Total</b></span></td>
                                        </tr>
                                    </tbody>
                                </table>
                                <table class="form lines">
                                    <colgroup><col /><col class="w3" /><col class="w2" /><col class="w3" /><col class="w4" /><col class="w4" /></colgroup>
                                    <thead>
                                        <tr>
                                            <th>商　　　品　　　名</th>
                                            <th>数　　量</th>
                                            <th>単　位</th>
                                            <th>単　　価</th>
                                            <th>金　　　額</th>
                                            <th>備　　　考</th>
                                        </tr>
                                    </thead>
                                    <tbody>
                                        {#each items as item}
                                            <tr>
                                                {#each item as cell}<td>{cell}</td>{/each}
                                                <td></td>
                                            </tr>
                                        {/each}
                                    </tbody>
                                </table>
                            </article>
                        </div>
                    </div>
                    {@render scrollbar('v', 0, 19)}
                </div>
                <div class="viewer-bottom">{@render scrollbar('h', 0, 99)}</div>
            </section>

            <div class="bottom-row">
                <section class="panel log-panel">
                    <div class="tabs">
                        <h2 class="tab">ログ</h2>
                        <button class="close" aria-label="閉じる">{@render icon('close', 18)}</button>
                    </div>
                    <div class="log-body">
                        <ul class="log">
                            {#each log as entry}
                                {@render logNode(entry)}
                            {/each}
                        </ul>
                        {@render scrollbar('v', 22, 78)}
                    </div>
                    <div class="log-bottom">{@render scrollbar('h', 0, 52)}</div>
                </section>

                <section class="panel hypo-panel">
                    <div class="tabs">
                        <h2 class="tab">仮説ツリー - SearchElements</h2>
                        <button class="close" aria-label="閉じる">{@render icon('close', 18)}</button>
                    </div>
                    <div class="hypo-body">
                        <div class="hypo-tree">
                            <ul>
                                <li class="hypo-root">{@render icon('elements', 24)}<span>SearchElements</span></li>
                                {#each hypotheses as h}
                                    <li>
                                        <i class="jump">{#if h.jump}{@render icon('jump', 18)}{/if}</i>
                                        {@render icon(h.icon, 24)}
                                        <span class:picked={h.selected}>{h.name}</span>
                                    </li>
                                {/each}
                            </ul>
                            {@render scrollbar('h', 0, 64)}
                        </div>
                        <div class="graph">
                            <svg width="24" height="136" aria-hidden="true">
                                <path d="M12 12v112" stroke="#12a838" stroke-width="2" />
                                <path d="M9 27h6l-3 13ZM9 63h6l-3 13ZM9 99h6l-3 13Z" fill="#12a838" stroke="#12a838" />
                                <circle cx="12" cy="12" r="12" fill="url(#g-halo)" />
                                <circle cx="12" cy="12" r="8" fill="url(#g-node)" />
                                <circle cx="12" cy="48" r="6" fill="url(#g-node)" stroke="#22a020" />
                                <circle cx="12" cy="84" r="6" fill="url(#g-node)" stroke="#22a020" />
                                <circle cx="12" cy="120" r="6" fill="url(#g-node)" stroke="#22a020" />
                            </svg>
                        </div>
                    </div>
                </section>
            </div>
        </div>
    </main>

    <footer class="status">
        <span>準備完了</span>
        <svg width="14" height="14" aria-hidden="true"><path d="M10 0h3v3h-3zM5 5h3v3H5zM10 5h3v3h-3zM0 10h3v3H0zM5 10h3v3H5zM10 10h3v3h-3z" fill="#bbb" /></svg>
    </footer>
</div>

<style>
    :global(body) {
        margin: 0;
    }

    .window {
        --line: #a0a0a0;
        --face: #f0f0f0;
        display: flex;
        flex-direction: column;
        box-sizing: border-box;
        height: 100vh;
        border: 1px solid #6e6e70;
        background: var(--face);
        color: #222;
        font: 17px/28px "Open Sans", "Noto Sans CJK JP", sans-serif;
        font-feature-settings: "palt";
        overflow: hidden;
    }

    .window :global(*) {
        box-sizing: border-box;
    }

    .sprite {
        position: absolute;
        width: 0;
        height: 0;
    }

    svg {
        flex: none;
        display: block;
    }

    .letter {
        fill: #1458a6;
        text-anchor: middle;
        font-family: "Liberation Sans", sans-serif;
    }

    .letter.serif {
        font-family: "Liberation Serif", serif;
        font-weight: 700;
    }

    .letter.bold {
        font-weight: 700;
    }

    button, select, input {
        font: inherit;
        font-feature-settings: inherit;
        color: inherit;
        margin: 0;
        padding: 0;
        border: none;
        background: none;
    }

    h1, h2, p, ul {
        margin: 0;
        padding: 0;
        font-weight: 400;
        list-style: none;
    }

    table {
        width: 100%;
        border-collapse: collapse;
        table-layout: fixed;
    }

    th, td {
        padding: 0;
        font-weight: 400;
        text-align: left;
        white-space: nowrap;
        overflow: hidden;
    }

    .titlebar {
        display: flex;
        align-items: center;
        gap: 6px;
        height: 46px;
        padding-left: 13px;
        background: #fff;
        color: #000;
    }

    .titlebar h1 {
        flex: 1;
        font-size: 17px;
        white-space: nowrap;
    }

    .controls {
        display: flex;
    }

    .controls button {
        display: grid;
        place-items: center;
        width: 70px;
        height: 46px;
    }

    .menubar {
        position: relative;
        display: flex;
        align-items: center;
        gap: 24px;
        height: 41px;
        padding: 0 19px;
        border-bottom: 2px solid #cacacf;
        background: #fff;
        font-size: 16px;
        color: #333;
    }

    .menubar::after {
        content: "";
        position: absolute;
        top: 0;
        right: 0;
        width: 171px;
        border-top: 1px solid #ccc;
    }

    .toolbar {
        display: flex;
        gap: 2px;
        height: 48px;
        padding-left: 4px;
        border-bottom: 2px solid #c4c4ca;
        background: #fff;
    }

    .toolbar + .toolbar {
        height: 47px;
        border-bottom: 1px solid #b0b0b0;
    }

    .group {
        display: flex;
        align-items: center;
        gap: 1px;
        flex: none;
        border-right: 2px solid #c4c4ca;
    }

    .file-group {
        width: 302px;
    }

    .nav-group {
        width: 397px;
    }

    .object-group {
        width: 257px;
    }

    .show-group {
        width: 286px;
    }

    .match-group {
        width: 218px;
    }

    .group.rest {
        flex: 1;
        min-width: 0;
        border: none;
    }

    .grip {
        flex: none;
        align-self: stretch;
        width: 3px;
        margin: 3px 5px 2px 3px;
        background: repeating-linear-gradient(#b0b0b0 0 3px, transparent 3px 6px);
    }

    .sep {
        flex: none;
        width: 1px;
        height: 38px;
        margin: 0 2px;
        background: #8c8c8c;
    }

    .tool {
        flex: none;
        display: grid;
        place-items: center;
        width: 46px;
        height: 44px;
        border: 1px solid transparent;
    }

    .tool.active {
        border-color: #99d1ff;
        background: #cce8ff;
    }

    .more {
        align-self: flex-start;
        margin: 4px 5px 0 auto;
    }

    .select {
        position: relative;
        display: inline-flex;
        align-items: center;
    }

    .select select {
        appearance: none;
        width: 100%;
        height: 100%;
        border: 1px solid #7a7a7a;
        background: #fff;
    }

    .select svg {
        position: absolute;
        right: 5px;
        pointer-events: none;
    }

    .type-select {
        width: 120px;
        height: 38px;
        font-size: 23px;
        color: #000;
    }

    .type-select select {
        padding-left: 6px;
    }

    .zoom {
        width: 68px;
        height: 38px;
        margin-left: 1px;
        padding-left: 7px;
        border: 1px solid #7a7a7a;
        border-right: none;
        font-size: 21px;
    }

    .work {
        flex: 1;
        display: flex;
        gap: 8px;
        min-height: 0;
        padding: 0 2px;
    }

    .side {
        flex: none;
        display: flex;
        flex-direction: column;
        gap: 4px;
        width: 279px;
    }

    .panel {
        display: flex;
        flex-direction: column;
        min-width: 0;
        border: solid var(--line);
        border-width: 1px 0 0 1px;
    }

    .tabs {
        flex: none;
        display: flex;
        align-items: center;
        justify-content: space-between;
        height: 37px;
        border-bottom: 2px solid var(--line);
        background: #fbfbfb;
    }

    .tab {
        display: flex;
        align-items: center;
        height: 35px;
        padding: 0 14px;
        border-right: 1px solid var(--line);
        background: #efefef;
        font-family: "Liberation Sans", "Noto Sans CJK JP", sans-serif;
        font-size: 17px;
        color: #000;
        white-space: nowrap;
    }

    .tab.strong {
        font-family: "Open Sans", "Noto Sans CJK JP", sans-serif;
        font-weight: 700;
        font-feature-settings: normal;
    }

    .close {
        margin-right: 4px;
    }

    .scrollbar {
        flex: none;
        display: flex;
        background: var(--face);
    }

    .scrollbar button {
        flex: none;
        display: grid;
        place-items: center;
    }

    .scrollbar.h {
        height: 23px;
    }

    .scrollbar.h button {
        width: 25px;
    }

    .scrollbar.v {
        flex-direction: column;
        width: 23px;
    }

    .scrollbar.v button {
        height: 26px;
    }

    .track {
        position: relative;
        flex: 1;
    }

    .thumb {
        background: #cdcdcd;
    }

    .h .thumb {
        height: 100%;
    }

    .v .thumb {
        position: absolute;
        width: 100%;
    }

    .batch {
        height: 338px;
        padding-bottom: 2px;
        border-top-width: 2px;
    }

    .batch-bar {
        flex: none;
        display: flex;
        align-items: center;
        gap: 23px;
        height: 38px;
        padding: 0 0 3px 12px;
    }

    .batch-select {
        width: 118px;
        height: 31px;
        font-size: 16px;
    }

    .batch-select select {
        padding-left: 8px;
    }

    .push {
        width: 108px;
        height: 33px;
        border: 1px solid #adadad;
        background: #e1e1e1;
        font-size: 16px;
    }

    .batch-list {
        flex: 1;
        overflow: hidden;
        background: #fff;
    }

    .c-page {
        width: 76px;
    }

    .c-check {
        width: 37px;
    }

    .c-alt {
        width: 151px;
    }

    .batch-list th {
        height: 35px;
        border-right: 2px solid #8c8c8c;
        border-bottom: 2px solid #8c8c8c;
        background: var(--face);
    }

    .th {
        display: flex;
        align-items: center;
        gap: 3px;
        padding-left: 5px;
    }

    .th.center {
        justify-content: center;
        padding: 0;
    }

    .sorted {
        position: relative;
    }

    .sorted::before {
        content: "";
        position: absolute;
        left: 4px;
        top: 0;
        border: 5px solid transparent;
        border-top: none;
        border-bottom: 5px solid #1b5fae;
    }

    .batch-list td {
        height: 28px;
    }

    .batch-list .matched {
        padding-left: 3px;
    }

    .batch-list .selected {
        outline: 1px dotted #000;
        outline-offset: -1px;
        background: var(--face);
    }

    .page-cell {
        position: relative;
        display: flex;
        align-items: center;
        gap: 4px;
        height: 28px;
        padding-left: 27px;
    }

    .bracket {
        position: absolute;
        top: 1px;
        bottom: 1px;
        left: 7px;
        width: 7px;
    }

    .bracket.blue {
        left: 16px;
    }

    .green {
        border-color: #00d000;
    }

    .blue {
        border-color: #0a84ff;
    }

    .single, .top, .bottom {
        border-style: solid;
        border-width: 0 0 0 3px;
    }

    .single, .top {
        border-top-width: 3px;
    }

    .single, .bottom {
        border-bottom-width: 3px;
    }

    .bracket.top {
        bottom: 0;
    }

    .bracket.bottom {
        top: 0;
    }

    .layout {
        flex: 1;
        min-height: 0;
    }

    .tree {
        flex: 1;
        background: #fff;
        font-size: 17px;
        line-height: 28px;
    }

    .tree :global(ul) {
        padding: 1px 0 0 24px;
    }

    .tree li {
        position: relative;
    }

    .node {
        position: relative;
        display: flex;
        align-items: center;
        height: 28px;
    }

    .node svg {
        margin-right: 7px;
    }

    .toggle-slot {
        display: grid;
        place-items: center;
        width: 24px;
    }

    .tree li li::before {
        content: "";
        position: absolute;
        top: -1px;
        bottom: 0;
        left: 12px;
        border-left: 1px dotted #888;
    }

    .tree li li:last-child::before {
        bottom: auto;
        height: 16px;
    }

    .tree li li > .node::before {
        content: "";
        position: absolute;
        top: 14px;
        left: 12px;
        width: 13px;
        border-top: 1px dotted #888;
    }

    .toggle {
        position: relative;
        width: 13px;
        height: 13px;
        border: 1px solid #808080;
        background:
            linear-gradient(#000, #000) center / 7px 1px no-repeat,
            #fff;
    }

    .toggle.plus {
        background:
            linear-gradient(#000, #000) center / 7px 1px no-repeat,
            linear-gradient(#000, #000) center / 1px 7px no-repeat,
            #fff;
    }

    .props {
        flex: none;
        height: 220px;
        border-bottom: 1px solid var(--line);
    }

    .props-title {
        flex: none;
        height: 38px;
        padding: 5px 14px;
        border: solid var(--line);
        border-width: 0 1px 2px 0;
        font-size: 17px;
        font-family: "Liberation Sans", "Noto Sans CJK JP", sans-serif;
    }

    .props-body {
        flex: none;
        display: flex;
        height: 116px;
        padding-right: 1px;
        overflow: hidden;
        background: #fff;
    }

    .props-body table {
        flex: 1;
        align-self: flex-start;
        width: 100%;
        min-width: 0;
        margin-right: 4px;
    }

    .c-value {
        width: 23px;
    }

    .props-body td, .props-body th {
        height: 28px;
        padding-left: 5px;
        border: solid #ededed;
        border-width: 0 1px 1px 0;
    }

    .props-body th {
        height: 36px;
        padding-left: 9px;
        border-bottom: none;
    }

    .props-rest {
        flex: 1;
        width: 90px;
        margin: 6px 0 0 auto;
        border-top: 1px solid var(--line);
    }

    .center-area {
        flex: 1;
        display: flex;
        flex-direction: column;
        gap: 6px;
        min-width: 0;
    }

    .page-panel {
        flex: 1;
        min-height: 0;
        border-top-width: 2px;
        border-left-width: 2px;
    }

    .page-panel .tabs {
        border-bottom-color: #808080;
    }

    .viewer {
        flex: 1;
        display: flex;
        min-height: 0;
        padding-right: 3px;
        border-left: 1px solid #808080;
    }

    .canvas {
        flex: 1;
        min-width: 0;
        padding: 0 16px 0 17px;
        margin-right: 1px;
        overflow: hidden;
    }

    .batch-mark {
        position: relative;
        padding-left: 4px;
    }

    .batch-mark::before {
        content: "";
        position: absolute;
        inset: 0 auto 0 0;
        width: 13px;
        border: solid #e00000;
        border-width: 3px 0 0 3px;
    }

    .page-caption {
        height: 29px;
        padding: 5px 0 0 27px;
        font: 21px/28px "Liberation Sans", "Noto Sans CJK JP", sans-serif;
        color: #1414ff;
        white-space: nowrap;
    }

    .sheet {
        position: relative;
        padding: 0 40px 0 73px;
        border: 3px solid #0a66cc;
        background: #fff;
        color: #111;
        font: 16px/26px "Liberation Serif", "Noto Sans CJK JP", serif;
        font-feature-settings: normal;
        font-weight: 500;
    }

    .sheet-title {
        padding: 57px 0 0 367px;
        font-size: 29px;
        font-weight: 700;
        line-height: 40px;
        white-space: nowrap;
    }

    .sheet-head {
        display: flex;
        justify-content: space-between;
        margin-top: -16px;
        padding-left: 63px;
    }

    .customer {
        font-size: 15px;
    }

    .digits {
        font-size: 16px;
    }

    .customer .company {
        margin-top: 22px;
        font-size: 21px;
        font-weight: 700;
        line-height: 30px;
    }

    .customer .honor {
        padding-left: 222px;
        font-size: 16px;
        font-weight: 700;
    }

    .issuer {
        position: relative;
        width: 298px;
        font-size: 15px;
        white-space: nowrap;
    }

    .number {
        display: flex;
        justify-content: flex-end;
        font-size: 17px;
        line-height: 24px;
    }

    .number span {
        width: 120px;
        border-bottom: 1px solid #999;
        text-align: center;
    }

    .date {
        display: grid;
        grid-template-columns: 50px 50px 40px 50px 40px 18px;
        justify-content: end;
        margin-top: 28px;
        padding-right: 9px;
        font-size: 17px;
        line-height: 30px;
    }

    .seller {
        margin: 22px 0 4px 2px;
        font-size: 21px;
        font-weight: 700;
        line-height: 24px;
    }

    .mark {
        position: relative;
        display: inline-block;
        outline: 1px solid #3a78d8;
    }

    .tag {
        position: absolute;
        bottom: 22px;
        left: 0;
        font: 17px/24px "Open Sans", sans-serif;
        color: #4a84e4;
    }

    .seller .tag {
        bottom: 28px;
    }

    .issuer .digits span {
        display: inline-block;
        width: 60px;
    }

    .stamps {
        position: absolute;
        right: 0;
        bottom: -23px;
        display: flex;
        width: 122px;
        height: 54px;
        border: 1px solid #999;
    }

    .stamps span {
        flex: 1;
    }

    .stamps span + span {
        border-left: 1px solid #999;
    }

    .greeting {
        margin: 18px 0 5px 2px;
        font-size: 14px;
        font-feature-settings: "palt";
    }

    .form th, .form td {
        height: 42px;
        border: 2px solid #222;
        font-size: 15px;
        line-height: 17px;
        text-align: center;
        white-space: pre;
        overflow: visible;
    }

    .form th {
        height: 26px;
        font-weight: 500;
    }

    .summary {
        margin-bottom: 21px;
    }

    .w2 {
        width: 60px;
    }

    .w3 {
        width: 90px;
    }

    .w4 {
        width: 120px;
    }

    .w5 {
        width: 150px;
    }

    .viewer-bottom {
        padding: 2px 28px 3px 3px;
    }

    .bottom-row {
        flex: none;
        display: flex;
        gap: 6px;
        height: 274px;
        margin-bottom: 4px;
    }

    .log-panel {
        width: 318px;
    }

    .log-body {
        flex: 1;
        display: flex;
        min-height: 0;
        background: #fff;
    }

    .log {
        flex: 1;
        min-width: 0;
        overflow: hidden;
        padding-left: 2px;
        font-size: 16px;
        white-space: nowrap;
    }

    .log :global(ul) {
        padding: 1px 0 0 30px;
    }

    .log-line {
        height: 28px;
    }

    .log-bottom {
        padding: 0 23px 3px 0;
    }

    .hypo-panel {
        flex: 1;
    }

    .hypo-body {
        flex: 1;
        display: flex;
        min-height: 0;
    }

    .hypo-tree {
        display: flex;
        flex-direction: column;
        width: 158px;
        padding-bottom: 3px;
        background: #fff;
    }

    .hypo-tree ul {
        flex: 1;
        overflow: hidden;
        font: 17px/28px "Liberation Sans", sans-serif;
    }

    .hypo-tree li {
        display: flex;
        align-items: center;
        gap: 7px;
        height: 36px;
        padding-left: 36px;
    }

    .hypo-tree .hypo-root {
        padding-left: 28px;
    }

    .jump {
        flex: none;
        width: 15px;
    }

    .hypo-tree li span {
        line-height: 20px;
    }

    .picked {
        background: #f0f0f0;
    }

    .graph {
        flex: 1;
        margin-left: 6px;
        padding: 42px 0 0 51px;
        border-left: 1px solid var(--line);
        background: #fff;
    }

    .status {
        flex: none;
        display: flex;
        align-items: center;
        justify-content: space-between;
        height: 37px;
        padding: 0 2px 0 4px;
        border-top: 1px solid #d4d4d4;
        font-size: 18px;
    }

    .status svg {
        align-self: flex-end;
    }
</style>
